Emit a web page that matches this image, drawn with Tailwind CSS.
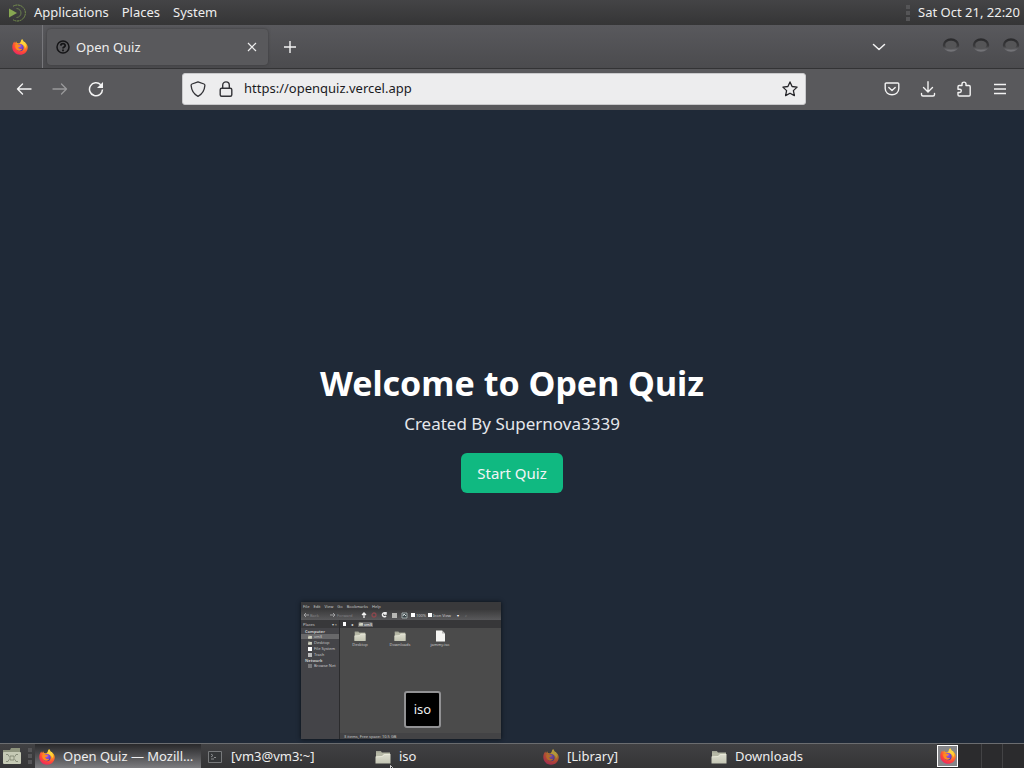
<!DOCTYPE html>
<html lang="en">
<head>
<meta charset="utf-8">
<meta name="viewport" content="width=device-width, initial-scale=1">
<title>Open Quiz</title>
<script src="https://cdn.jsdelivr.net/npm/@tailwindcss/browser@4"></script>
</head>
<body class="relative flex h-screen flex-col overflow-hidden bg-[#1f2937] font-['Noto_Sans',sans-serif] text-[13px] text-[#eeeeee]">

<!-- Shared artwork -->
<svg class="absolute h-0 w-0" aria-hidden="true">
  <defs>
    <radialGradient id="flame" cx="70%" cy="15%" r="95%">
      <stop offset="0" stop-color="#fff04a"/><stop offset=".35" stop-color="#ffa51f"/><stop offset=".7" stop-color="#ff4a36"/><stop offset="1" stop-color="#e8206b"/>
    </radialGradient>
    <radialGradient id="globe" cx="45%" cy="30%" r="70%">
      <stop offset="0" stop-color="#a55bf5"/><stop offset="1" stop-color="#5134a5"/>
    </radialGradient>
    <linearGradient id="paper" x1="0" y1="0" x2="0" y2="1">
      <stop offset="0" stop-color="#deded0"/><stop offset="1" stop-color="#c3c5b3"/>
    </linearGradient>
    <linearGradient id="rim" x1="0" y1="0" x2="0" y2="1">
      <stop offset="0" stop-color="#2b2b2d"/><stop offset=".6" stop-color="#3b3b3d"/><stop offset="1" stop-color="#737377"/>
    </linearGradient>
  </defs>
  <symbol id="firefox" viewBox="0 0 16 16">
    <path fill="url(#flame)" d="M10 .3c.9.8 1.300 1.500 1.500 2.500 1-.2 1.400.2 2.200 1.200C15.200 5.500 15.900 7.200 15.700 9c-.4 4-3.600 6.800-7.700 6.800S.4 12.600.3 8.600C.2 6.300.9 4.300 2.300 2.600l.7 1.600 1.100-2 .9 1.700c.9 0 1.500.2 2.200.7L8.600 3C8.700 1.800 9.200.9 10 .3z"/>
    <circle cx="8" cy="8.600" r="3.700" fill="url(#globe)"/>
    <path fill="#ff8b20" d="M3.300 6.200c1.500-1 3-1 4.400-.2L9 6.400c-.3 1-1.300 1.200-2.200 1.600-.6.300-.5 1 .1 1.500 1 .7 2.200.5 3.300-.1-.5 2-2.400 2.700-4.200 2C4 10.700 3 8.500 3.300 6.200z"/>
    <path fill="#ffd43a" d="M10 .3c.9.8 1.300 1.500 1.500 2.500 2.200 1.600 3 4.200 2 6.600-.3-2-1.300-3.400-3-4.200C9 4.300 9 2 10 .3z"/>
  </symbol>
  <symbol id="folder" viewBox="0 0 16 16">
    <path fill="#a1a394" d="M1 2h5l1 2H1z"/>
    <path fill="#b6b8a6" d="M1 3.500h14V14H1z"/>
    <path fill="url(#paper)" d="M.5 7.500 7 7l2-2h6.500v9.500H.5z"/>
    <path fill="none" stroke="#eeeede" stroke-width=".7" d="M1 7.900 7.300 7.500l2-2H15"/>
  </symbol>
</svg>

<!-- Desktop panel -->
<header class="flex h-[25px] shrink-0 items-center bg-linear-to-b from-[#444446] to-[#353536] pr-1 pl-2">
  <nav class="flex flex-1 items-center" aria-label="Desktop menus">
    <svg class="mr-2 h-[18px] w-[18px]" viewBox="0 0 18 18" fill="none" aria-hidden="true">
      <path fill="#87a752" d="M1 4.500 9 9 1 13.500z"/>
      <path stroke="#87a752" stroke-width=".8" d="M5 2.300A8 8 0 1 1 5 15.700" stroke-dasharray="2 .5"/>
      <path stroke="#728b50" stroke-width=".8" d="M8.500 4.500a4.500 4.500 0 1 1 0 9"/>
    </svg>
    <button class="mr-[13px]">Applications</button>
    <button class="mr-[13px]">Places</button>
    <button>System</button>
  </nav>
  <span class="mr-2 flex w-1 flex-col gap-[2px]" aria-hidden="true"><i class="h-1 bg-[#555557]"></i><i class="h-1 bg-[#555557]"></i><i class="h-1 bg-[#555557]"></i></span>
  <button class="whitespace-nowrap">Sat Oct 21, 22:20</button>
</header>

<!-- Tab strip -->
<section class="flex h-11 shrink-0 items-center border-b border-[#333335] bg-linear-to-b from-[#59595d] to-[#4b4b4e]" aria-label="Tabs">
  <button class="flex h-full w-[43px] items-center border-r border-[#77777b] pl-3" aria-label="Firefox"><svg class="h-4 w-4"><use href="#firefox"/></svg></button>
  <div class="ml-1 flex h-9 w-[221px] items-center rounded-sm bg-[#59595c] px-[9px] pt-px shadow-[0_0_3px_#3a3a3c]">
    <svg class="mr-[6px] h-[14px] w-[14px]" viewBox="0 0 14 14" fill="none" stroke="#151517" aria-hidden="true"><circle cx="7" cy="7" r="6" stroke-width="1.500"/><path stroke-width="1.800" d="M4.800 5.600C4.900 3 9.200 3 9.200 5.500 9.200 7 7 6.800 7 8.500M7 9.600v1.600"/></svg>
    <span class="flex-1 pt-px">Open Quiz</span>
    <button class="mr-px" aria-label="Close tab"><svg class="h-3 w-3" viewBox="0 0 12 12" stroke="#eeeeee" stroke-width="1.200"><path d="m2 2 8 8m0-8-8 8"/></svg></button>
  </div>
  <button class="ml-[15px]" aria-label="New tab"><svg class="h-[14px] w-[14px]" viewBox="0 0 14 14" stroke="#f3f3f3" stroke-width="1.400"><path d="M7 1v12M1 7h12"/></svg></button>
  <span class="flex-1"></span>
  <button class="mr-[55px]" aria-label="List all tabs"><svg class="h-4 w-4" viewBox="0 0 16 16" fill="none" stroke="#f3f3f3" stroke-width="1.500" stroke-linecap="round" stroke-linejoin="round"><path d="m2.500 5.500 5.500 5 5.500-5"/></svg></button>
  <div class="flex gap-3 pr-1 pb-1">
    <button aria-label="Minimize"><svg class="h-4 w-[18px]" viewBox="0 0 18 16"><ellipse cx="9" cy="8" rx="7" ry="5.500" fill="#555557" stroke="url(#rim)" stroke-width="2.500"/></svg></button>
    <button aria-label="Maximize"><svg class="h-4 w-[18px]" viewBox="0 0 18 16"><ellipse cx="9" cy="8" rx="7" ry="5.500" fill="#555557" stroke="url(#rim)" stroke-width="2.500"/></svg></button>
    <button aria-label="Close"><svg class="h-4 w-[18px]" viewBox="0 0 18 16"><ellipse cx="9" cy="8" rx="7" ry="5.500" fill="#555557" stroke="url(#rim)" stroke-width="2.500"/></svg></button>
  </div>
</section>

<!-- Navigation toolbar -->
<section class="flex h-[41px] shrink-0 items-center bg-[#59595c] px-4 pb-px" aria-label="Navigation">
  <div class="flex w-[166px] shrink-0 gap-5">
    <button aria-label="Back"><svg class="h-4 w-4" viewBox="0 0 16 16" fill="none" stroke="#f3f3f3" stroke-width="1.400" stroke-linecap="round" stroke-linejoin="round"><path d="M15 8H1.500m5-5-5 5 5 5"/></svg></button>
    <button aria-label="Forward" disabled><svg class="h-4 w-4" viewBox="0 0 16 16" fill="none" stroke="#99999b" stroke-width="1.300" stroke-linecap="round" stroke-linejoin="round"><path d="M1 8h13.500m-5-5 5 5-5 5"/></svg></button>
    <button aria-label="Reload"><svg class="h-4 w-4" viewBox="0 0 16 16" fill="none" stroke="#f3f3f3" stroke-width="1.500"><path d="M12.700 3.800A6.500 6.500 0 1 0 14.500 8.500"/><path fill="#f3f3f3" stroke="none" d="M15 1v6H9z"/></svg></button>
  </div>
  <form class="flex h-8 flex-1 items-center rounded-[3px] border border-[#c9c9cb] bg-[#ededee] px-[7px]">
    <svg class="mr-3 h-4 w-4" viewBox="0 0 16 16" fill="none" stroke="#343438" stroke-width="1.300" stroke-linejoin="round" aria-hidden="true"><path d="m8 .8 6 2.200c.8.300.9.700.9 1.400C14.500 9.500 12.500 13 8 15.300 3.500 13 1.500 9.500 1.100 4.400c0-.7.100-1.100.9-1.400z"/></svg>
    <svg class="mr-[10px] h-4 w-4" viewBox="0 0 16 16" fill="none" stroke="#343438" stroke-width="1.400" aria-hidden="true"><rect x="2.200" y="7.200" width="11.600" height="8" rx="1.500"/><path d="M4.700 7V4.200C4.700-.2 11.300-.2 11.300 4.200V7"/></svg>
    <input class="min-w-0 flex-1 bg-transparent text-[#1b1b1e] outline-none" aria-label="Address" value="https://openquiz.vercel.app">
    <button type="button" aria-label="Bookmark this page"><svg class="h-4 w-4" viewBox="0 0 16 16" fill="none" stroke="#252529" stroke-width="1.300" stroke-linejoin="round"><path d="m8 .9 2.100 4.600 5 .6-3.700 3.500 1 5L8 12.200l-4.400 2.400 1-5L.9 6.100l5-.6z"/></svg></button>
  </form>
  <div class="ml-[78px] flex shrink-0 gap-5">
    <button aria-label="Save to Pocket"><svg class="h-4 w-4" viewBox="0 0 16 16" fill="none" stroke="#f3f3f3" stroke-width="1.400" stroke-linecap="round" stroke-linejoin="round"><path d="M2.200 2h11.600q1 0 1 1v4.500c0 8.300-13.600 8.300-13.600 0V3q0-1 1-1z"/><path d="m4.800 6.500 3.200 3 3.200-3"/></svg></button>
    <button aria-label="Downloads"><svg class="h-4 w-4" viewBox="0 0 16 16" fill="none" stroke="#f3f3f3" stroke-width="1.400" stroke-linecap="round" stroke-linejoin="round"><path d="M8 .8v10M3.500 6.500 8 11l4.500-4.500M1.500 12.500v1q0 1.500 1.500 1.500h10q1.500 0 1.500-1.500v-1"/></svg></button>
    <button aria-label="Extensions"><svg class="h-4 w-4" viewBox="0 0 16 16" fill="none" stroke="#f3f3f3" stroke-width="1.400" stroke-linejoin="round"><path d="M6 4.500V3c0-2.500 4-2.500 4 0v1.500h3q1.200 0 1.200 1.200v8.100q0 1.200-1.200 1.200H3.200Q2 15 2 13.800V11.500h1.800c2 0 2-3.300 0-3.300H2V5.700q0-1.200 1.200-1.200z"/></svg></button>
    <button aria-label="Application menu"><svg class="h-4 w-4" viewBox="0 0 16 16" stroke="#f3f3f3" stroke-width="1.300"><path d="M2 3.500h12M2 8h12M2 12.500h12"/></svg></button>
  </div>
</section>

<!-- Quiz page -->
<main class="flex min-h-0 flex-1 flex-col items-center justify-center bg-[#1f2937] pt-[3px]">
  <h1 class="text-[34px] leading-10 font-bold text-white">Welcome to Open Quiz</h1>
  <p class="mt-[7px] text-[17px] leading-7 text-gray-200">Created By Supernova3339</p>
  <button class="mt-[15px] rounded-md bg-[#10b981] px-4 py-2 text-[15px] leading-6 text-gray-100">Start Quiz</button>
</main>

<!-- Taskbar -->
<footer class="relative flex h-[25px] shrink-0 items-stretch border-t border-[#6b6d70] bg-linear-to-b from-[#414143] to-[#353536]">
  <button class="flex w-[35px] shrink-0 items-center gap-[6px] pl-[2px]" aria-label="Show files">
    <svg class="h-5 w-5" viewBox="0 0 20 20"><path fill="#8f947e" d="M1 4h7l1-2h9v6H1z"/><rect x="1" y="6" width="18" height="12" rx="1" fill="#c6cab5"/><path fill="none" stroke="#7b816d" stroke-width=".8" d="M4 8.500h2l1 2m-3 5h2l1-2m9-5h-2l-1 2m3 5h-2l-1-2M8 10h4v4H8z"/></svg>
    <span class="flex w-1 flex-col gap-[2px]"><i class="h-1 bg-[#555557]"></i><i class="h-1 bg-[#555557]"></i><i class="h-1 bg-[#555557]"></i></span>
  </button>
  <nav class="flex flex-1 gap-[2px]" aria-label="Open windows">
    <button class="flex w-[166px] items-center gap-2 bg-linear-to-b from-[#29292b] to-[#7d7d80] pt-px pl-1 text-left whitespace-nowrap"><svg class="h-4 w-4 shrink-0"><use href="#firefox"/></svg>Open Quiz — Mozill…</button>
    <button class="flex w-[166px] items-center gap-2 pt-px pl-1 text-left"><svg class="h-4 w-4" viewBox="0 0 16 16"><path fill="#343638" stroke="#77797b" d="M1.500 2.500h13v11h-13z"/><path fill="none" stroke="#8b8d8f" d="m4 5 2 1.500L4 8m3 .5h2M4 10h3"/></svg>[vm3@vm3:~]</button>
    <button class="flex w-[166px] items-center gap-2 pt-px pl-1 text-left"><svg class="h-4 w-4"><use href="#folder"/></svg>iso</button>
    <button class="flex w-[166px] items-center gap-2 pt-px pl-1 text-left"><svg class="h-4 w-4 opacity-60"><use href="#firefox"/></svg>[Library]</button>
    <button class="flex w-[166px] items-center gap-2 pt-px pl-1 text-left"><svg class="h-4 w-4"><use href="#folder"/></svg>Downloads</button>
  </nav>
  <div class="flex w-[87px] shrink-0 items-stretch bg-[#2b2b2d]" aria-label="Workspaces">
    <button class="my-px flex w-[21px] items-center justify-center border border-white bg-[#858588]" aria-label="Workspace 1"><svg class="h-4 w-4"><use href="#firefox"/></svg></button>
    <button class="w-[24px] border-r border-[#434345]" aria-label="Workspace 2"></button>
    <button class="w-[21px] border-r border-[#434345]" aria-label="Workspace 3"></button>
    <button class="flex-1" aria-label="Workspace 4"></button>
  </div>

  <!-- Window preview above the taskbar -->
  <div class="absolute bottom-[29px] left-[301px] flex h-[137px] w-[200px] flex-col bg-[#4b4b4b] text-[4px] leading-[5px] text-[#c9c9c9] shadow-[0_0_4px_#0b0f15]">
    <div class="flex h-2 items-center gap-1 bg-[#39393b] px-[2px]"><span>File</span><span>Edit</span><span>View</span><span>Go</span><span>Bookmarks</span><span>Help</span></div>
    <div class="flex h-[10px] items-center bg-linear-to-b from-[#3c3c3d] to-[#59595b] px-[2px] text-[#838385]">
      <svg class="mr-px h-[6px] w-[6px]" viewBox="0 0 6 6" fill="none" stroke="#a0a0a2"><path d="M6 3H1m2-2L1 3l2 2"/></svg><span class="w-5">Back</span>
      <svg class="mr-px h-[6px] w-[6px]" viewBox="0 0 6 6" fill="none" stroke="#a0a0a2"><path d="M0 3h5M3 1l2 2-2 2"/></svg><span class="w-[23px]">Forward</span>
      <svg class="mr-px h-2 w-[50px]" viewBox="0 0 50 8" fill="none"><path stroke="#f2f2f2" stroke-width="1.300" d="M4 7V2M2 4l2-2 2 2"/><circle cx="14" cy="4" r="2" stroke="#8b474d" stroke-width="1.300"/><path stroke="#f2f2f2" stroke-width="1.500" d="M26 2.500A2 2 0 1 0 26 5M26 1v2h-2"/><path fill="#b7b7b4" d="M32 2h5v5h-5z"/><path fill="#394447" stroke="#b3bcbc" stroke-width=".8" d="M42 2h5v5h-5z"/><path stroke="#d2d8d8" d="m43 5 1-2 2 2"/></svg>
      <i class="mr-px h-1 w-1 bg-white"></i><span class="w-3 text-[#cccccc]">100%</span><i class="mr-px h-1 w-1 bg-white"></i><span class="w-6 text-[#cccccc]">Icon View</span><span class="text-white">▾</span><span class="ml-[6px]">⌕</span>
    </div>
    <div class="flex min-h-0 flex-1">
      <div class="flex w-[39px] flex-col border-r border-[#2b2b2d] bg-[#444448] leading-[5px]">
        <div class="flex h-2 items-center justify-between bg-[#38383a] px-[2px]"><span>Places</span><span>▾ ×</span></div>
        <b class="mt-px pl-1">Computer</b>
        <div class="flex items-center gap-[2px] bg-[#68686a] pl-[7px]"><svg class="h-1 w-1"><use href="#folder"/></svg>vm3</div>
        <div class="mt-px flex items-center gap-[2px] pl-[7px]"><svg class="h-1 w-1"><use href="#folder"/></svg>Desktop</div>
        <div class="mt-px flex items-center gap-[2px] pl-[7px]"><i class="h-1 w-1 bg-white"></i>File System</div>
        <div class="mt-px flex items-center gap-[2px] pl-[7px]"><i class="h-1 w-1 bg-[#b9b9b9]"></i>Trash</div>
        <b class="mt-px pl-1">Network</b>
        <div class="flex items-center gap-[2px] pl-[7px]"><i class="h-1 w-1 bg-[#777779]"></i>Browse Net</div>
      </div>
      <div class="flex flex-1 flex-col">
        <div class="flex h-2 items-center gap-[5px] bg-[#373739] px-[3px]"><i class="h-1 w-[3px] bg-white"></i><span class="text-white">◂</span><span class="flex items-center gap-px rounded-t-xs bg-[#666668] px-px text-white"><svg class="h-1 w-1"><use href="#folder"/></svg>vm3</span></div>
        <div class="mt-[2px] flex flex-1 items-start text-center">
          <div class="flex w-10 flex-col items-center"><svg class="h-3 w-3"><use href="#folder"/></svg><span>Desktop</span></div>
          <div class="flex w-10 flex-col items-center"><svg class="h-3 w-3"><use href="#folder"/></svg><span>Downloads</span></div>
          <div class="flex w-10 flex-col items-center"><svg class="h-3 w-3" viewBox="0 0 12 12"><path fill="#f5f5f2" d="M2 .5h6l3 3v8H2z"/><path fill="#b8b8b5" d="M8 .5v3h3z"/></svg><span>jammy.iso</span></div>
        </div>
        <div class="flex h-[6px] items-center bg-[#434345] pl-1">3 items, Free space: 10.5 GB</div>
      </div>
    </div>
  </div>

  <div class="absolute bottom-10 left-[404px] flex h-[37px] w-[37px] items-center justify-center rounded-[3px] border-2 border-[#929294] bg-black pt-px" role="tooltip">iso</div>

  <svg class="absolute top-[21px] left-[390px] h-[14px] w-[9px]" viewBox="0 0 9 14" aria-hidden="true"><path fill="#000" stroke="#fff" stroke-width=".8" d="M.5.500v11l2.500-2 2 4 1.500-.8-2-3.700h4z"/></svg>
</footer>
</body>
</html>
